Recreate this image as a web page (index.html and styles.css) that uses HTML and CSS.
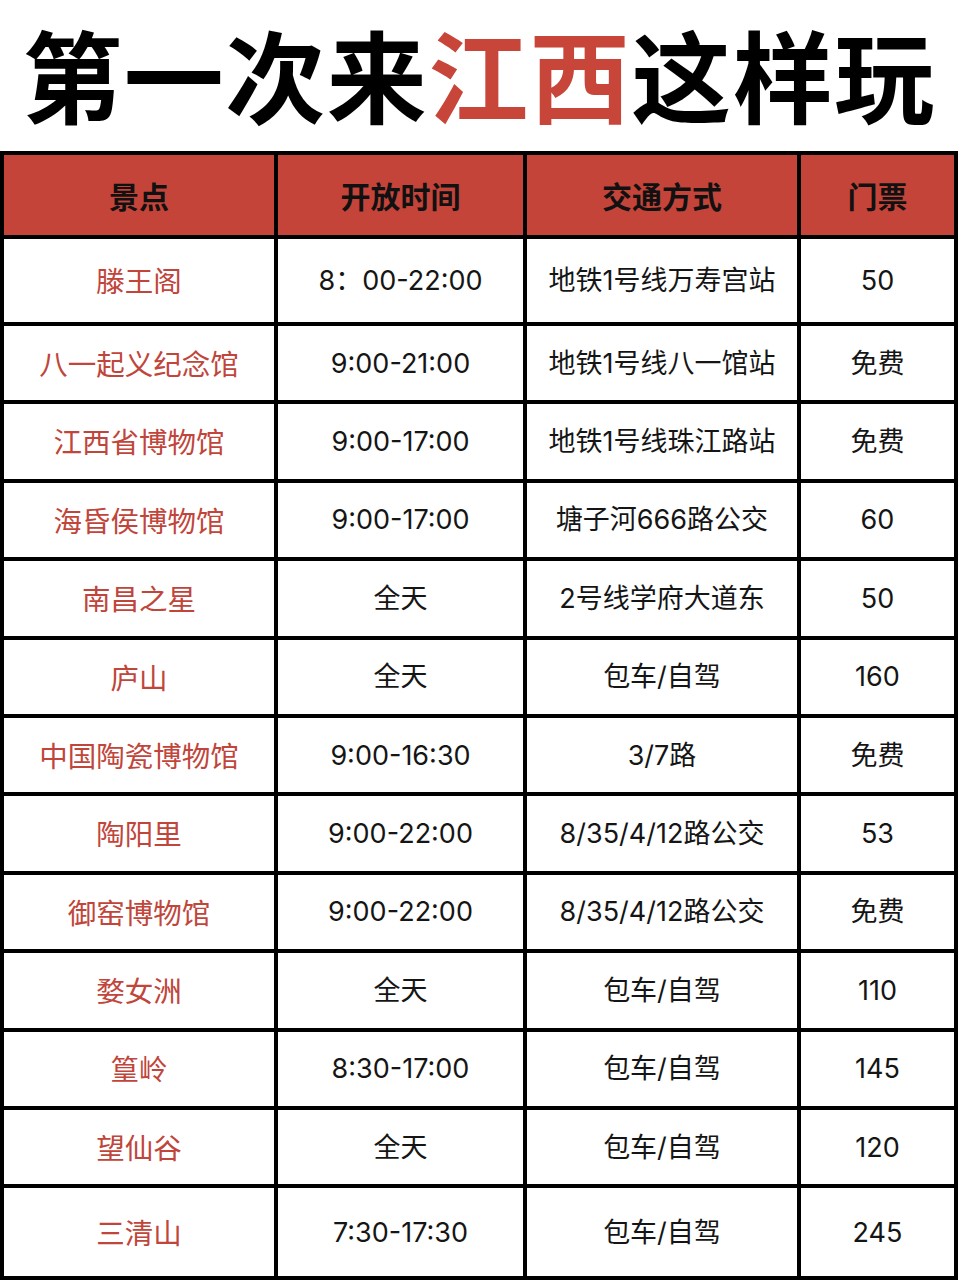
FILE: index.html
```html
<!DOCTYPE html>
<html lang="zh-CN">
<head>
<meta charset="utf-8">
<title>第一次来江西这样玩</title>
<link rel="stylesheet" href="styles.css">
</head>
<body>
<div class="page">
  <h1 class="title"><span>第一次来</span><span class="hl">江西</span><span>这样玩</span></h1>
  <div class="table">
    <div class="cell head">景点</div>
    <div class="cell head">开放时间</div>
    <div class="cell head">交通方式</div>
    <div class="cell head">门票</div>

    <div class="cell name">滕王阁</div>
    <div class="cell">8：00-22:00</div>
    <div class="cell">地铁1号线万寿宫站</div>
    <div class="cell">50</div>

    <div class="cell name">八一起义纪念馆</div>
    <div class="cell">9:00-21:00</div>
    <div class="cell">地铁1号线八一馆站</div>
    <div class="cell">免费</div>

    <div class="cell name">江西省博物馆</div>
    <div class="cell">9:00-17:00</div>
    <div class="cell">地铁1号线珠江路站</div>
    <div class="cell">免费</div>

    <div class="cell name">海昏侯博物馆</div>
    <div class="cell">9:00-17:00</div>
    <div class="cell">塘子河666路公交</div>
    <div class="cell">60</div>

    <div class="cell name">南昌之星</div>
    <div class="cell">全天</div>
    <div class="cell">2号线学府大道东</div>
    <div class="cell">50</div>

    <div class="cell name">庐山</div>
    <div class="cell">全天</div>
    <div class="cell">包车/自驾</div>
    <div class="cell">160</div>

    <div class="cell name">中国陶瓷博物馆</div>
    <div class="cell">9:00-16:30</div>
    <div class="cell">3/7路</div>
    <div class="cell">免费</div>

    <div class="cell name">陶阳里</div>
    <div class="cell">9:00-22:00</div>
    <div class="cell">8/35/4/12路公交</div>
    <div class="cell">53</div>

    <div class="cell name">御窑博物馆</div>
    <div class="cell">9:00-22:00</div>
    <div class="cell">8/35/4/12路公交</div>
    <div class="cell">免费</div>

    <div class="cell name">婺女洲</div>
    <div class="cell">全天</div>
    <div class="cell">包车/自驾</div>
    <div class="cell">110</div>

    <div class="cell name">篁岭</div>
    <div class="cell">8:30-17:00</div>
    <div class="cell">包车/自驾</div>
    <div class="cell">145</div>

    <div class="cell name">望仙谷</div>
    <div class="cell">全天</div>
    <div class="cell">包车/自驾</div>
    <div class="cell">120</div>

    <div class="cell name">三清山</div>
    <div class="cell">7:30-17:30</div>
    <div class="cell">包车/自驾</div>
    <div class="cell">245</div>
  </div>
</div>
</body>
</html>
```

FILE: styles.css
```css
html, body {
  margin: 0;
  padding: 0;
  background: #ffffff;
}

body {
  font-family: Inter, "Noto Sans CJK SC", sans-serif;
  color: #111111;
}

.page {
  width: 958px;
  height: 1280px;
  overflow: hidden;
}

.title {
  margin: 0;
  height: 151px;
  box-sizing: border-box;
  padding-top: 0;
  text-align: center;
  white-space: nowrap;
  font-family: "Noto Sans CJK SC", sans-serif;
  font-size: 100px;
  line-height: 146px;
  font-weight: 700;
  letter-spacing: 1.5px;
  color: #000000;
}

.title .hl {
  color: #c8453a;
}

.table {
  display: grid;
  grid-template-columns: 270px 245px 270px 153px;
  grid-template-rows: 80px 83px repeat(11, 74.4px) 88px;
  gap: 4px;
  padding: 4px;
  background: #000000;
}

.cell {
  background: #ffffff;
  display: flex;
  align-items: center;
  justify-content: center;
  font-size: 27px;
  line-height: 1;
  color: #151515;
  white-space: nowrap;
}

.cell.head {
  background: #c5443a;
  font-family: "Noto Sans CJK SC", sans-serif;
  font-weight: 700;
  font-size: 30px;
  color: #111111;
}

.cell.name {
  font-family: "Noto Sans CJK SC", sans-serif;
  font-size: 28.5px;
  color: #c0453b;
}
```
